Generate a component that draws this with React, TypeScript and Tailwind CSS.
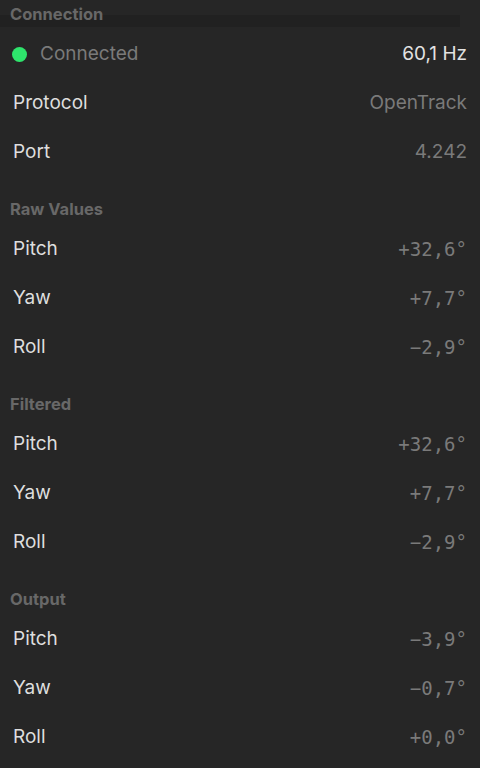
import React from "react";

type Row = { label: string; value: string };

const sans = "font-['Inter','Liberation_Sans',sans-serif]";
const mono = "font-['DejaVu_Sans_Mono','Liberation_Mono',monospace]";

const sections: { title: string; rows: Row[] }[] = [
  {
    title: "Raw Values",
    rows: [
      { label: "Pitch", value: "+32,6°" },
      { label: "Yaw", value: "+7,7°" },
      { label: "Roll", value: "−2,9°" },
    ],
  },
  {
    title: "Filtered",
    rows: [
      { label: "Pitch", value: "+32,6°" },
      { label: "Yaw", value: "+7,7°" },
      { label: "Roll", value: "−2,9°" },
    ],
  },
  {
    title: "Output",
    rows: [
      { label: "Pitch", value: "−3,9°" },
      { label: "Yaw", value: "−0,7°" },
      { label: "Roll", value: "+0,0°" },
    ],
  },
];

function Header({ title, band }: { title: string; band?: boolean }) {
  return (
    <div className="relative flex h-[30px] items-center px-[10px] pb-[2px]">
      {band && <div className="absolute left-0 top-[15px] h-[12px] w-[460px] bg-[#212121]" />}
      <span className="relative text-[16.5px] font-bold text-[#686868]">{title}</span>
    </div>
  );
}

function Line({ children }: { children: React.ReactNode }) {
  return <div className="flex h-[49px] items-center justify-between px-[13px]">{children}</div>;
}

export default function App() {
  return (
    <div className={`min-h-[768px] w-[480px] bg-[#262626] ${sans}`}>
      <Header title="Connection" band />
      <Line>
        <div className="flex items-center">
          <span className="ml-[-1px] block h-[15px] w-[15px] rounded-full bg-[#2ee46c]" />
          <span className="ml-[13px] text-[19px] text-[#7a7a7a]">Connected</span>
        </div>
        <span className="text-[19px] text-[#e2e2e2]">60,1 Hz</span>
      </Line>
      <Line>
        <span className="text-[19px] text-[#dedede]">Protocol</span>
        <span className="text-[19px] text-[#7a7a7a]">OpenTrack</span>
      </Line>
      <Line>
        <span className="text-[19px] text-[#dedede]">Port</span>
        <span className="text-[19px] text-[#7a7a7a]">4.242</span>
      </Line>
      {sections.map((s) => (
        <div key={s.title} className="mt-[18px]">
          <Header title={s.title} />
          {s.rows.map((r) => (
            <Line key={r.label}>
              <span className="text-[19px] text-[#dedede]">{r.label}</span>
              <span className={`${mono} text-[19px] text-[#7a7a7a]`}>{r.value}</span>
            </Line>
          ))}
        </div>
      ))}
    </div>
  );
}
